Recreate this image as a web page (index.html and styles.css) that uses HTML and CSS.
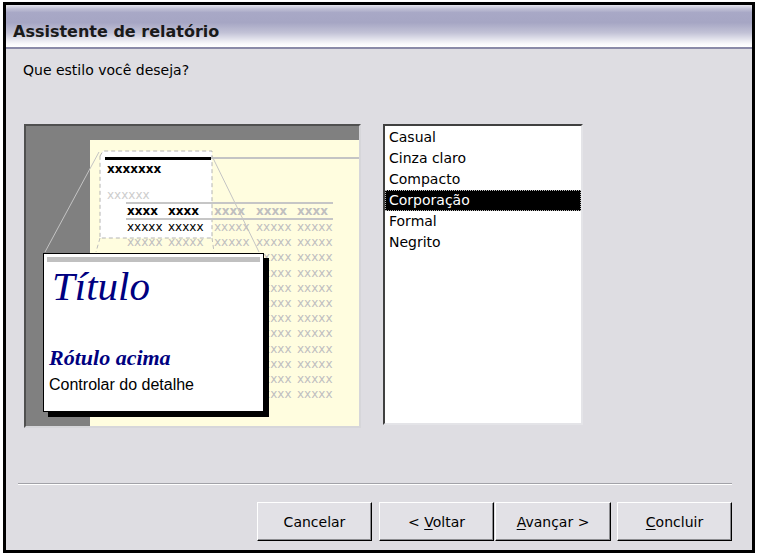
FILE: index.html
```html
<!doctype html>
<html lang="pt">
	<head>
		<meta charset="UTF-8">
		<title>Assistente de relatório</title>
		<link rel="stylesheet" href="styles.css">
	</head>
	<body>
		<div class="window">
			<div class="titlebar">Assistente de relatório</div>
			<div class="content">
				<p class="question">Que estilo você deseja?</p>
				<div class="panes">
					<div class="preview">
						<div class="page">
							<div class="rule-top"><span class="rule-black"></span><span class="rule-gray"></span></div>
							<div class="rep-title">xxxxxxx</div>
							<div class="rep-sub">xxxxxx</div>
							<div class="rep-table">
								<div class="row head"><span class="dark">xxxx</span><span class="dark">xxxx</span><span>xxxx</span><span>xxxx</span><span>xxxx</span></div>
								<div class="row"><span class="dark">xxxxx</span><span class="dark">xxxxx</span><span>xxxxx</span><span>xxxxx</span><span>xxxxx</span></div>
								<div class="row"><span>xxxxx</span><span>xxxxx</span><span>xxxxx</span><span>xxxxx</span><span>xxxxx</span></div>
								<div class="row covered"><span>xxxxx</span><span>xxxxx</span><span>xxxxx</span><span>xxxxx</span><span>xxxxx</span></div>
								<div class="row covered"><span>xxxxx</span><span>xxxxx</span><span>xxxxx</span><span>xxxxx</span><span>xxxxx</span></div>
								<div class="row covered"><span>xxxxx</span><span>xxxxx</span><span>xxxxx</span><span>xxxxx</span><span>xxxxx</span></div>
								<div class="row covered"><span>xxxxx</span><span>xxxxx</span><span>xxxxx</span><span>xxxxx</span><span>xxxxx</span></div>
								<div class="row covered"><span>xxxxx</span><span>xxxxx</span><span>xxxxx</span><span>xxxxx</span><span>xxxxx</span></div>
								<div class="row covered"><span>xxxxx</span><span>xxxxx</span><span>xxxxx</span><span>xxxxx</span><span>xxxxx</span></div>
								<div class="row covered"><span>xxxxx</span><span>xxxxx</span><span>xxxxx</span><span>xxxxx</span><span>xxxxx</span></div>
								<div class="row covered"><span>xxxxx</span><span>xxxxx</span><span>xxxxx</span><span>xxxxx</span><span>xxxxx</span></div>
								<div class="row covered"><span>xxxxx</span><span>xxxxx</span><span>xxxxx</span><span>xxxxx</span><span>xxxxx</span></div>
								<div class="row covered"><span>xxxxx</span><span>xxxxx</span><span>xxxxx</span><span>xxxxx</span><span>xxxxx</span></div>
							</div>
						</div>
						<svg class="callout" width="333" height="300" viewBox="0 0 333 300">
							<path d="M74 30 L77 25 L186 25 L186 112 L74 112 Z" fill="#fff" stroke="#b4b4b4" stroke-dasharray="4 3"/>
							<path d="M74 112 L70 126 M186 112 L188 126" stroke="#bdbdbd" fill="none" stroke-dasharray="4 3"/>
							<path d="M73 26 L19 126 M186 30 L233 126" stroke="#c4c4c4" fill="none"/>
						</svg>
						<div class="sample">
							<div class="sample-bar"></div>
							<div class="sample-title">Título</div>
							<div class="sample-label">Rótulo acima</div>
							<div class="sample-detail">Controlar do detalhe</div>
						</div>
					</div>
					<ul class="styles">
						<li>Casual</li>
						<li>Cinza claro</li>
						<li>Compacto</li>
						<li class="selected">Corporação</li>
						<li>Formal</li>
						<li>Negrito</li>
					</ul>
				</div>
				<div class="separator"></div>
				<div class="buttons">
					<button class="btn">Cancelar</button>
					<button class="btn btn-back">&lt; <u>V</u>oltar</button>
					<button class="btn btn-next"><u>A</u>vançar &gt;</button>
					<button class="btn btn-finish"><u>C</u>oncluir</button>
				</div>
			</div>
		</div>
	</body>
</html>
```

FILE: styles.css
```css
html, body{
	margin: 0;
	background: #fff;
}
.window{
	margin: 2px 0 0 3px;
	width: 752px;
	height: 551px;
	box-sizing: border-box;
	border: 3px solid #000;
	background: #dedde2;
	font-family: "DejaVu Sans", sans-serif;
	font-size: 14px;
	color: #000;
}
.titlebar{
	height: 44px;
	box-sizing: border-box;
	padding: 15px 0 0 7px;
	line-height: 24px;
	font-size: 16px;
	font-weight: bold;
	color: #1a1a1a;
	border-radius: 5px 5px 0 0;
	border-bottom: 2px solid #8a8aa8;
	background: linear-gradient(to bottom, #e6e6ee 0, #c4c4d8 8%, #a8a8c6 18%, #a6a6c4 42%, #c2c2d6 66%, #e8e8f0 84%, #fafafc 93%, #fff 100%);
}
.content{
	padding: 12px 20px 0 12px;
}
.question{
	margin: 0 0 0 5px;
	line-height: 18px;
}
.panes{
	display: flex;
	align-items: flex-start;
	gap: 22px;
	margin: 45px 0 0 6px;
}

/* preview */
.preview{
	position: relative;
	width: 337px;
	height: 304px;
	box-sizing: border-box;
	border: 2px solid;
	border-color: #505050 #d6d6da #d6d6da #505050;
	background: #808080;
}
.page{
	margin: 14px 0 0 64px;
	height: 286px;
	background: #fffddf;
	font-size: 12px;
	overflow: hidden;
}
.page > *{
	position: relative;
	z-index: 1;
}
.rule-top{
	display: flex;
	align-items: flex-start;
	padding-top: 17px;
	padding-left: 15px;
}
.rule-black{
	width: 106px;
	height: 3px;
	background: #000;
}
.rule-gray{
	flex: 1;
	height: 2px;
	background: #c4c4c4;
}
.rep-title{
	margin: 2px 0 0 17px;
	line-height: 14px;
	font-weight: bold;
}
.rep-sub{
	margin: 12px 0 0 17px;
	line-height: 14px;
	color: #cdcdcd;
}
.rep-table{
	margin-left: 36px;
	width: 207px;
}
.row{
	display: grid;
	grid-template-columns: 41px 46px 42px 41px 1fr;
	padding-left: 1px;
	line-height: 15.2px;
	color: #bfbfbf;
	white-space: nowrap;
}
.row.head{
	line-height: 14px;
	font-weight: bold;
	border-top: 2px solid #c6c6c6;
	border-bottom: 2px solid #c6c6c6;
}
.row .dark{
	color: #000;
}
.row.covered span:nth-child(-n+3){
	visibility: hidden;
}
.callout{
	position: absolute;
	left: 0;
	top: 0;
	z-index: 0;
}
.sample{
	position: absolute;
	left: 17px;
	top: 127px;
	z-index: 2;
	width: 221px;
	height: 159px;
	box-sizing: border-box;
	padding: 3px 3px 0 5px;
	border: 1px solid #000;
	background: #fff;
	box-shadow: 5px 5px 0 #000;
}
.sample-bar{
	height: 5px;
	margin-left: -2px;
	background: #c0c0c0;
}
.sample-title{
	margin: 4px 0 0 3px;
	font-family: "Liberation Serif", serif;
	font-style: italic;
	font-size: 41px;
	line-height: 41px;
	color: #000080;
}
.sample-label{
	margin-top: 40px;
	font-family: "Liberation Serif", serif;
	font-style: italic;
	font-weight: bold;
	font-size: 22px;
	line-height: 22px;
	color: #000080;
}
.sample-detail{
	margin-top: 8px;
	font-family: "Liberation Sans", sans-serif;
	font-size: 16px;
	line-height: 16px;
}

/* list */
.styles{
	list-style: none;
	margin: 0;
	padding: 1px 0 0;
	width: 200px;
	height: 301px;
	box-sizing: border-box;
	border: 2px solid;
	border-color: #404040 #e4e4e8 #e4e4e8 #404040;
	background: #fff;
}
.styles li{
	padding-left: 4px;
	line-height: 21px;
	height: 21px;
}
.styles li.selected{
	background: #000;
	color: #fff;
	outline: 1px dotted #bbb;
	outline-offset: -1px;
}

/* footer */
.separator{
	margin-top: 55px;
	border-top: 1px solid #a2a2a8;
	border-bottom: 1px solid #fff;
}
.buttons{
	display: flex;
	justify-content: flex-end;
	margin-top: 17px;
}
.btn{
	width: 115px;
	height: 39px;
	padding: 0;
	font-family: "DejaVu Sans", sans-serif;
	font-size: 14px;
	color: #000;
	background: #e2e1e6;
	border: 1px solid;
	border-color: #fff #000 #000 #fff;
	box-shadow: inset -1px -1px 0 #8c8c90;
}
.btn u{
	text-decoration-thickness: 1px;
	text-underline-offset: 2px;
}
.btn-back{
	margin-left: 7px;
}
.btn-next{
	margin-left: 1px;
	width: 116px;
}
.btn-finish{
	margin-left: 6px;
}
```
